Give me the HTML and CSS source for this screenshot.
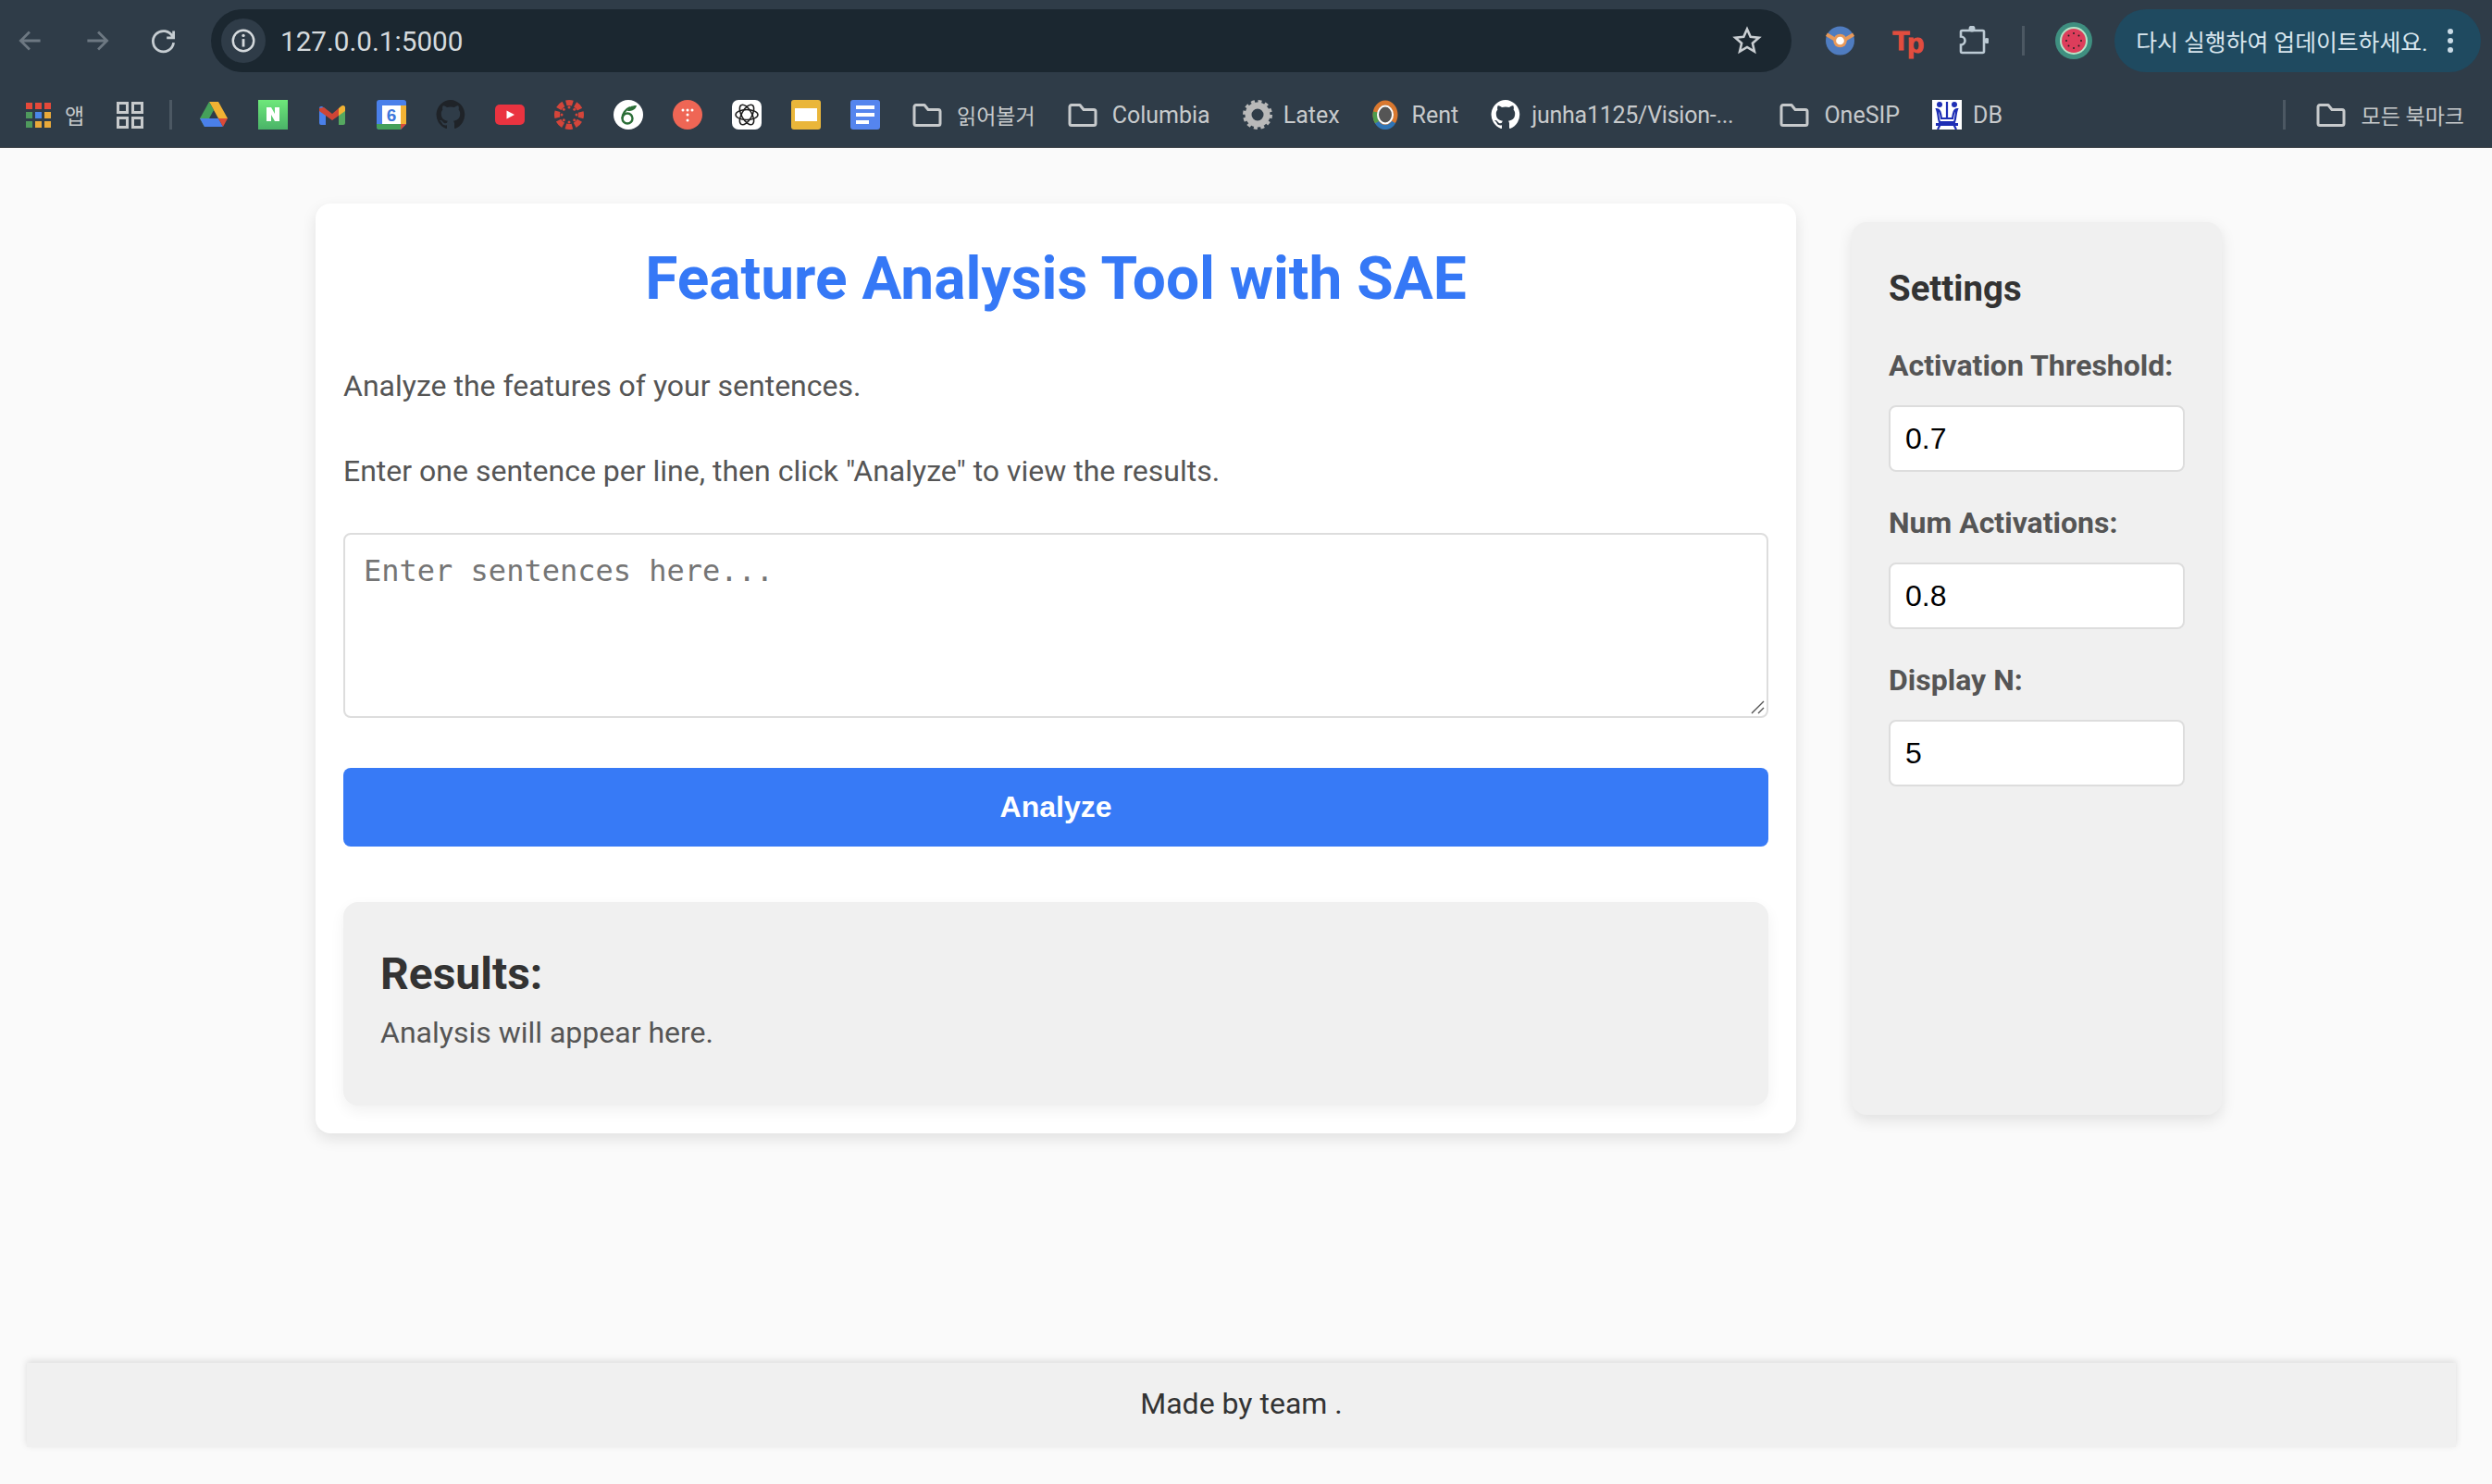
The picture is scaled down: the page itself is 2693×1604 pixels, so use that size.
FILE: index.html
```html
<!DOCTYPE html>
<html lang="en">

<head>
    <meta charset="UTF-8">
    <title>Feature Analysis Tool with SAE</title>
    <link rel="stylesheet" href="styles.css">
</head>

<body>
    <header class="chrome">
        <div class="toolbar">
            <svg class="nav-icon dim" viewBox="0 0 32 32"><path d="M26 16H7M15 7l-9 9 9 9" /></svg>
            <svg class="nav-icon dim" viewBox="0 0 32 32"><path d="M6 16h19M17 7l9 9-9 9" /></svg>
            <svg class="nav-icon" viewBox="0 0 32 32"><path d="M25 12a10.500 10.500 0 1 0 1 6M26 6v7h-7" /></svg>
            <div class="omnibox">
                <span class="site-chip">
                    <svg viewBox="0 0 32 32" width="30" height="30"><circle cx="16" cy="16" r="12" fill="none" stroke="#d5dadd" stroke-width="2.600" /><path d="M16 14v9" stroke="#d5dadd" stroke-width="3" /><circle cx="16" cy="10" r="1.800" fill="#d5dadd" /></svg>
                </span>
                <span class="url">127.0.0.1:5000</span>
                <svg class="star" viewBox="0 0 32 32"><path d="M16 3.500l3.700 8.300 9 .9-6.800 6 2 8.800-7.900-4.600-7.900 4.600 2-8.800-6.800-6 9-.9z" /></svg>
            </div>
            <div class="ext-icons">
                <svg class="ext" viewBox="0 0 32 32"><circle cx="16" cy="16" r="16" fill="#4f7cc0" /><path d="M1 9l10 6h10l10-6" fill="none" stroke="#e8995a" stroke-width="4" /><circle cx="16" cy="16" r="7.500" fill="#e8995a" /><circle cx="16" cy="16" r="4.500" fill="#fff" /></svg>
                <span class="ext tp">T<i>p</i></span>
                <svg class="ext puzzle" viewBox="0 0 32 32"><circle cx="14" cy="3" r="3.500" fill="#bccad4" /><circle cx="30" cy="16" r="3" fill="#bccad4" /><path d="M3.500 5h22a1.500 1.500 0 0 1 1.500 1.500v21a1.500 1.500 0 0 1-1.500 1.500h-22A1.500 1.500 0 0 1 2 27.500V20.500a4.500 4.500 0 0 0 0-9V6.500A1.500 1.500 0 0 1 3.500 5z" fill="none" stroke="#bccad4" stroke-width="2.600" /></svg>
            </div>
            <span class="tool-sep"></span>
            <svg class="profile" viewBox="0 0 40 40"><circle cx="20" cy="20" r="20" fill="#3f8f80" /><circle cx="20" cy="20" r="15" fill="#b7e4c7" /><circle cx="20" cy="20" r="13" fill="#dd3d5b" /><g fill="#222"><circle cx="20" cy="12" r="1" /><circle cx="12" cy="20" r="1" /><circle cx="28" cy="20" r="1" /><circle cx="20" cy="28" r="1" /><circle cx="14.500" cy="14.500" r="1" /><circle cx="25.500" cy="14.500" r="1" /><circle cx="14.500" cy="25.500" r="1" /><circle cx="25.500" cy="25.500" r="1" /></g></svg>
            <div class="update-pill">
                <span>다시 실행하여 업데이트하세요.</span>
                <svg viewBox="0 0 8 32" width="8" height="32"><circle cx="4" cy="6" r="3" /><circle cx="4" cy="16" r="3" /><circle cx="4" cy="26" r="3" /></svg>
            </div>
        </div>

        <nav class="bookmarks">
            <svg class="mark apps" viewBox="0 0 27 27">
                <rect width="7" height="7" fill="#e5493a" /><rect x="10" width="7" height="7" fill="#e5493a" /><rect x="20" width="7" height="7" fill="#e5493a" />
                <rect y="10" width="7" height="7" fill="#4f9a5d" /><rect x="10" y="10" width="7" height="7" fill="#4a86e8" /><rect x="20" y="10" width="7" height="7" fill="#e9a93a" />
                <rect y="20" width="7" height="7" fill="#4f9a5d" /><rect x="10" y="20" width="7" height="7" fill="#e9a93a" /><rect x="20" y="20" width="7" height="7" fill="#e9a93a" />
            </svg>
            <span class="mark-label ko apps-label">앱</span>
            <svg class="mark groups" viewBox="0 0 29 29" fill="none" stroke="#c7cacc" stroke-width="3"><rect x="1.500" y="1.500" width="10" height="10" /><rect x="17.500" y="1.500" width="10" height="10" /><rect x="1.500" y="17.500" width="10" height="10" /><rect x="17.500" y="17.500" width="10" height="10" /></svg>
            <span class="mark-sep"></span>

            <div class="favicons">
                <svg class="fav" viewBox="0 0 32 32"><path d="M11 2h10l10 18H21L16 11z" fill="#f2b233" /><path d="M11 2l5 9-5 9-5 9-5-9z" fill="#45a05a" /><path d="M1 20h20l5 9H6z" fill="#4a80ea" /><path d="M21 20h10l-5 9z" fill="#dc4a38" /></svg>
                <svg class="fav" viewBox="0 0 32 32"><defs><linearGradient id="ng" x1="0" y1="0" x2="0" y2="1"><stop offset="0" stop-color="#6ee87a" /><stop offset="1" stop-color="#4ab368" /></linearGradient></defs><rect width="32" height="32" fill="url(#ng)" /><path d="M9 8h5l4 7V8h5v15h-5l-4-7v7H9z" fill="#fff" /></svg>
                <svg class="fav" viewBox="0 0 32 32"><path d="M2 9a2 2 0 0 1 2-2 3 3 0 0 1 3 1.500l2 1.500v17H4a2 2 0 0 1-2-2z" fill="#4a80ea" /><path d="M23 10l2-2a3 3 0 0 1 3-1 2 2 0 0 1 2 2v16a2 2 0 0 1-2 2h-5z" fill="#55a860" /><path d="M2 9l5-1 9 7 7-6v8l-7 5-14-10z" fill="#cf4535" /><path d="M23 9l3-2.500a2.500 2.500 0 0 1 4 2.500v3l-7 5z" fill="#f2b233" /></svg>
                <svg class="fav" viewBox="0 0 32 32"><path d="M3 0h26a3 3 0 0 1 3 3v23l-6 6H3a3 3 0 0 1-3-3V3a3 3 0 0 1 3-3z" fill="#4a80ea" /><rect x="6" y="6" width="20" height="20" fill="#fff" /><rect x="26" y="6" width="6" height="20" fill="#f2b233" /><path d="M0 26h26v6H3a3 3 0 0 1-3-3z" fill="#45a05a" /><path d="M26 26h6l-6 6z" fill="#dc4a38" /><text x="16" y="23" class="cal-num">6</text></svg>
                <svg class="fav" viewBox="0 0 32 32"><path d="M16 0a16 16 0 0 0-5 31c.800.100 1-.300 1-.800v-3c-4.400 1-5.300-2-5.300-2-.700-1.800-1.800-2.300-1.800-2.300-1.500-1 .100-1 .100-1 1.600.100 2.400 1.600 2.400 1.600 1.400 2.400 3.700 1.700 4.600 1.300.100-1 .600-1.700 1-2.100-3.500-.400-7.200-1.800-7.200-7.900 0-1.700.600-3.100 1.600-4.200-.200-.400-.700-2 .200-4.200 0 0 1.300-.400 4.400 1.600a15 15 0 0 1 8 0c3.100-2 4.400-1.600 4.400-1.600.900 2.200.300 3.800.200 4.200 1 1.100 1.600 2.500 1.600 4.200 0 6.100-3.700 7.500-7.300 7.900.600.500 1.100 1.500 1.100 3v4.400c0 .400.200.900 1 .800A16 16 0 0 0 16 0z" fill="#1f2328" /></svg>
                <svg class="fav" viewBox="0 0 32 32"><rect y="5" width="32" height="22" rx="5" fill="#ea3340" /><path d="M12.500 11.500l8.500 4.500-8.500 4.500z" fill="#fff" /></svg>
                <svg class="fav" viewBox="0 0 32 32"><circle cx="16" cy="16" r="13" fill="none" stroke="#d4453a" stroke-width="6" stroke-dasharray="7.200 3" stroke-dashoffset="3.600" /><g fill="#d4453a"><circle cx="16" cy="8" r="1.500" /><circle cx="16" cy="24" r="1.500" /><circle cx="8" cy="16" r="1.500" /><circle cx="24" cy="16" r="1.500" /><circle cx="10.300" cy="10.300" r="1.500" /><circle cx="21.700" cy="10.300" r="1.500" /><circle cx="10.300" cy="21.700" r="1.500" /><circle cx="21.700" cy="21.700" r="1.500" /></g></svg>
                <svg class="fav" viewBox="0 0 32 32"><circle cx="16" cy="16" r="16" fill="#fff" /><circle cx="15" cy="20" r="5.500" fill="none" stroke="#2b6e37" stroke-width="2.400" /><path d="M18 8c-5 2-8.500 7-8.500 12" fill="none" stroke="#2b6e37" stroke-width="2.400" /><path d="M15 12c1-4 4-6 10-6-1 4-4 6-10 6z" fill="#2b6e37" /></svg>
                <svg class="fav" viewBox="0 0 32 32"><circle cx="16" cy="16" r="16" fill="#ef6655" /><g fill="#fff"><circle cx="11" cy="11" r="1.500" /><circle cx="16" cy="11" r="1.500" /><circle cx="21" cy="11" r="1.500" /><circle cx="16" cy="16" r="1.500" /><circle cx="16" cy="22" r="1.500" /></g></svg>
                <svg class="fav" viewBox="0 0 32 32"><rect width="32" height="32" rx="7" fill="#fff" /><g fill="none" stroke="#1c1c1c" stroke-width="1.500"><ellipse cx="16" cy="16" rx="12" ry="5.500" /><ellipse cx="16" cy="16" rx="12" ry="5.500" transform="rotate(60 16 16)" /><ellipse cx="16" cy="16" rx="12" ry="5.500" transform="rotate(120 16 16)" /></g></svg>
                <svg class="fav" viewBox="0 0 32 32"><rect width="32" height="32" rx="3" fill="#eab63a" /><rect x="4" y="9" width="24" height="14" fill="#fff" /></svg>
                <svg class="fav" viewBox="0 0 32 32"><rect width="32" height="32" rx="3" fill="#5585ee" /><rect x="6" y="6" width="20" height="4" fill="#fff" /><rect x="6" y="14" width="20" height="4" fill="#fff" /><rect x="6" y="22" width="14" height="4" fill="#fff" /></svg>
            </div>

            <a class="mark-link"><svg class="folder" viewBox="0 0 32 32"><path d="M2 7.500a2 2 0 0 1 2-2h9l4 5h11a2 2 0 0 1 2 2v13a2 2 0 0 1-2 2H4a2 2 0 0 1-2-2z" /></svg><span class="mark-label ko">읽어볼거</span></a>
            <a class="mark-link"><svg class="folder" viewBox="0 0 32 32"><path d="M2 7.500a2 2 0 0 1 2-2h9l4 5h11a2 2 0 0 1 2 2v13a2 2 0 0 1-2 2H4a2 2 0 0 1-2-2z" /></svg><span class="mark-label">Columbia</span></a>
            <a class="mark-link"><svg class="fav-sm" viewBox="0 0 32 32"><circle cx="16" cy="16" r="10" fill="none" stroke="#b9b9b9" stroke-width="7" /><circle cx="16" cy="16" r="14.500" fill="none" stroke="#b9b9b9" stroke-width="3" stroke-dasharray="4 3.600" /></svg><span class="mark-label">Latex</span></a>
            <a class="mark-link"><svg class="fav-sm rent" viewBox="0 0 28 32"><ellipse cx="14" cy="16" rx="11" ry="13" fill="none" stroke="#d9782f" stroke-width="5" /><path d="M5 24a11 13 0 0 0 18 0" fill="none" stroke="#2f74b5" stroke-width="5" /><path d="M3.500 13a11 13 0 0 0 1.500 11" fill="none" stroke="#4e9c4e" stroke-width="5" /><ellipse cx="14" cy="16" rx="8" ry="9.500" fill="#555" stroke="#fff" stroke-width="2" /></svg><span class="mark-label">Rent</span></a>
            <a class="mark-link"><svg class="fav-sm" viewBox="0 0 32 32"><path d="M16 0a16 16 0 0 0-5 31c.800.100 1-.300 1-.800v-3c-4.400 1-5.300-2-5.300-2-.700-1.800-1.800-2.300-1.800-2.300-1.500-1 .100-1 .100-1 1.600.100 2.400 1.600 2.400 1.600 1.400 2.400 3.700 1.700 4.600 1.300.100-1 .600-1.700 1-2.100-3.500-.400-7.200-1.800-7.200-7.900 0-1.700.600-3.100 1.600-4.200-.200-.400-.700-2 .200-4.200 0 0 1.300-.400 4.400 1.600a15 15 0 0 1 8 0c3.100-2 4.400-1.600 4.400-1.600.900 2.200.300 3.800.200 4.200 1 1.100 1.600 2.500 1.600 4.200 0 6.100-3.700 7.500-7.300 7.900.600.500 1.100 1.500 1.100 3v4.400c0 .400.200.900 1 .800A16 16 0 0 0 16 0z" fill="#fff" /></svg><span class="mark-label repo">junha1125/Vision-...</span></a>
            <a class="mark-link onesip"><svg class="folder" viewBox="0 0 32 32"><path d="M2 7.500a2 2 0 0 1 2-2h9l4 5h11a2 2 0 0 1 2 2v13a2 2 0 0 1-2 2H4a2 2 0 0 1-2-2z" /></svg><span class="mark-label">OneSIP</span></a>
            <a class="mark-link"><svg class="fav-sm" viewBox="0 0 32 32"><rect width="32" height="32" fill="#fff" /><g fill="none" stroke="#1f2fb5" stroke-width="2.200"><path d="M5 10c3 0 4 3 5 10h12c1-7 2-10 5-10-2 5-1 9-3 14H8C6 19 7 15 5 10z" /><path d="M16 2v18M7 26h18M9 26l-3 6M23 26l3 6" /></g><circle cx="8" cy="5" r="3" fill="#1f2fb5" /><circle cx="24" cy="5" r="3" fill="#1f2fb5" /><rect x="4" y="25" width="24" height="3" fill="#1f2fb5" /></svg><span class="mark-label">DB</span></a>

            <span class="mark-sep all-sep"></span>
            <a class="mark-link all-marks"><svg class="folder" viewBox="0 0 32 32"><path d="M2 7.500a2 2 0 0 1 2-2h9l4 5h11a2 2 0 0 1 2 2v13a2 2 0 0 1-2 2H4a2 2 0 0 1-2-2z" /></svg><span class="mark-label ko">모든 북마크</span></a>
        </nav>
    </header>

    <div class="page">
        <div class="columns">
            <main class="card">
                <h1>Feature Analysis Tool with SAE</h1>
                <p>Analyze the features of your sentences.</p>
                <p>Enter one sentence per line, then click "Analyze" to view the results.</p>
                <div class="text-wrap">
                    <textarea placeholder="Enter sentences here..."></textarea>
                    <svg class="grip" viewBox="0 0 15 15"><path d="M1 14L14 1M8 14l6-6" /></svg>
                </div>
                <button type="button" class="analyze">Analyze</button>
                <section class="results">
                    <h3>Results:</h3>
                    <p>Analysis will appear here.</p>
                </section>
            </main>

            <aside class="settings">
                <h3>Settings</h3>
                <label for="threshold">Activation Threshold:</label>
                <input id="threshold" type="text" value="0.7">
                <label for="num">Num Activations:</label>
                <input id="num" type="text" value="0.8">
                <label for="display">Display N:</label>
                <input id="display" type="text" value="5">
            </aside>
        </div>

        <footer class="foot">Made by team .</footer>
    </div>
</body>

</html>
```

FILE: styles.css
```css
* {
    box-sizing: border-box;
    margin: 0;
    padding: 0;
}

html,
body {
    height: 100%;
}

body {
    display: flex;
    flex-direction: column;
    width: 2693px;
    height: 1604px;
    overflow: hidden;
    background-color: #fafafa;
    font-family: Roboto, "Noto Sans CJK KR", sans-serif;
    color: #555;
}

/* ---browser bar--- */
.chrome {
    height: 160px;
    flex-shrink: 0;
    background-color: #2f3c48;
    border-bottom: 1px solid #43484c;
}

.toolbar {
    display: flex;
    align-items: center;
    height: 88px;
    padding: 10px 12px 10px 16px;
}

.nav-icon {
    width: 34px;
    height: 34px;
    margin-right: 38px;
    fill: none;
    stroke: #c6cdd2;
    stroke-width: 2.6;
}

.nav-icon.dim {
    stroke: #6d7882;
}

.nav-icon:nth-child(3) {
    margin-right: 34px;
}

.omnibox {
    display: flex;
    align-items: center;
    width: 1709px;
    height: 68px;
    padding: 0 32px 0 11px;
    border-radius: 34px;
    background-color: #1b2730;
}

.site-chip {
    display: flex;
    align-items: center;
    justify-content: center;
    width: 48px;
    height: 48px;
    border-radius: 50%;
    background-color: #2f3c48;
}

.url {
    flex: 1;
    margin-left: 16px;
    font-size: 29.7px;
    color: #d5dadd;
}

.star {
    width: 32px;
    height: 32px;
    fill: none;
    stroke: #c9ced2;
    stroke-width: 2.6;
}

.ext-icons {
    display: flex;
    align-items: center;
    gap: 41px;
    margin-left: 37px;
}

.ext {
    width: 31px;
    height: 32px;
}

.puzzle {
    width: 32px;
}

.tp {
    font-family: "Liberation Sans", sans-serif;
    font-size: 30px;
    font-weight: 700;
    line-height: 32px;
    letter-spacing: -2.5px;
    color: #e24d3e;
    -webkit-text-stroke: 1px #e24d3e;
    white-space: nowrap;
}

.tp i {
    font-style: normal;
    vertical-align: -3px;
}

.tool-sep {
    width: 3px;
    height: 32px;
    margin: 0 33px 0 36px;
    background-color: #4c5863;
}

.profile {
    width: 40px;
    height: 40px;
}

.update-pill {
    display: flex;
    align-items: center;
    justify-content: space-between;
    width: 396px;
    height: 68px;
    margin-left: 24px;
    padding: 0 29px 0 23px;
    border-radius: 34px;
    background-color: #1f4a60;
    color: #d8e6ee;
    fill: #c9dbe6;
    font-size: 24.8px;
    white-space: nowrap;
}

/* ---bookmarks--- */
.bookmarks {
    display: flex;
    align-items: center;
    height: 72px;
    padding-left: 28px;
}

.mark {
    flex-shrink: 0;
}

.apps {
    width: 27px;
    height: 27px;
}

.apps-label {
    width: 20px;
    margin-left: 15px;
}

.groups {
    width: 29px;
    height: 29px;
    margin-left: 36px;
}

.mark-sep {
    width: 3px;
    height: 32px;
    margin-left: 28px;
    background-color: #4c5863;
}

.favicons {
    display: flex;
    gap: 32px;
    margin-left: 29px;
}

.fav {
    display: block;
    width: 32px;
    height: 32px;
}

.cal-num {
    font-family: "Liberation Sans", sans-serif;
    font-size: 19px;
    font-weight: 700;
    text-anchor: middle;
    fill: #3f78dd;
}

.mark-label {
    font-size: 25px;
    color: #c7cacc;
    white-space: nowrap;
}

.mark-label.ko {
    font-size: 23px;
}

.mark-label.repo {
    letter-spacing: -0.25px;
}

.mark-link {
    display: flex;
    align-items: center;
    margin-left: 35px;
}

.onesip {
    margin-left: 50px;
}

.folder {
    width: 32px;
    height: 32px;
    margin-right: 16px;
    fill: none;
    stroke: #c7cacc;
    stroke-width: 3;
    stroke-linejoin: round;
}

.fav-sm {
    width: 32px;
    height: 32px;
    margin-right: 12px;
}

.fav-sm.rent {
    width: 28px;
    margin-right: 15px;
}

.all-sep {
    margin-left: auto;
}

.all-marks {
    margin-left: 33px;
    margin-right: 30px;
}

/* ---app page--- */
.page {
    flex: 1;
    display: flex;
    flex-direction: column;
}

.columns {
    display: flex;
    align-items: flex-start;
    padding: 60px 0 0 341px;
}

.card {
    width: 1600px;
    height: 1005px;
    padding: 42px 30px 0;
    border-radius: 16px;
    background-color: #fff;
    box-shadow: 0 6px 16px rgba(0, 0, 0, 0.1);
}

h1 {
    margin-bottom: 52px;
    font-size: 64px;
    font-weight: 700;
    line-height: 80px;
    text-align: center;
    color: #3578f6;
}

.card > p {
    margin-bottom: 46px;
    font-size: 32px;
    line-height: 46px;
}

.text-wrap {
    position: relative;
    margin-top: -2px;
}

textarea {
    display: block;
    width: 100%;
    height: 200px;
    padding: 20px;
    border: 2px solid #ddd;
    border-radius: 8px;
    font-family: "DejaVu Sans Mono", monospace;
    font-size: 32px;
    resize: none;
    background-color: #fff;
}

textarea::placeholder {
    color: #757575;
}

/* drag corner sits on top of the textarea */
.grip {
    position: absolute;
    right: 4px;
    bottom: 4px;
    width: 15px;
    height: 15px;
    fill: none;
    stroke: #555;
    stroke-width: 1.4;
    pointer-events: none;
}

.analyze {
    display: block;
    width: 100%;
    height: 85px;
    margin-top: 54px;
    border: none;
    border-radius: 8px;
    background-color: #377af6;
    color: #fff;
    font-family: "Liberation Sans", sans-serif;
    font-size: 32px;
    font-weight: 700;
}

.results {
    height: 220px;
    margin-top: 60px;
    padding: 50px 40px 32px;
    border-radius: 16px;
    background-color: #f0f0f0;
    box-shadow: 0 6px 16px rgba(0, 0, 0, 0.06);
}

.results h3 {
    margin-bottom: 12px;
    font-size: 48px;
    font-weight: 700;
    line-height: 56px;
    color: #333;
}

.results p {
    font-size: 32px;
    line-height: 46px;
}

.settings {
    display: flex;
    flex-direction: column;
    width: 400px;
    height: 965px;
    margin: 20px 0 0 60px;
    padding: 48px 40px;
    border-radius: 16px;
    background-color: #f0f0f0;
    box-shadow: 0 6px 16px rgba(0, 0, 0, 0.1);
}

.settings h3 {
    margin-bottom: 40px;
    font-size: 38.4px;
    font-weight: 700;
    line-height: 48px;
    color: #333;
}

.settings label {
    margin-bottom: 24px;
    font-size: 32px;
    font-weight: 700;
    line-height: 38px;
}

.settings input {
    width: 320px;
    height: 72px;
    margin-bottom: 36px;
    padding: 0 16px;
    border: 2px solid #ddd;
    border-radius: 8px;
    background-color: #fff;
    color: #000;
    font-family: "Liberation Sans", sans-serif;
    font-size: 32px;
}

.foot {
    display: flex;
    align-items: center;
    justify-content: center;
    height: 91px;
    margin: auto 39px 40px 29px;
    padding-bottom: 3px;
    background-color: #f0f0f0;
    box-shadow: 0 -2px 7px rgba(0, 0, 0, 0.13);
    font-size: 32px;
    color: #333;
}
```
